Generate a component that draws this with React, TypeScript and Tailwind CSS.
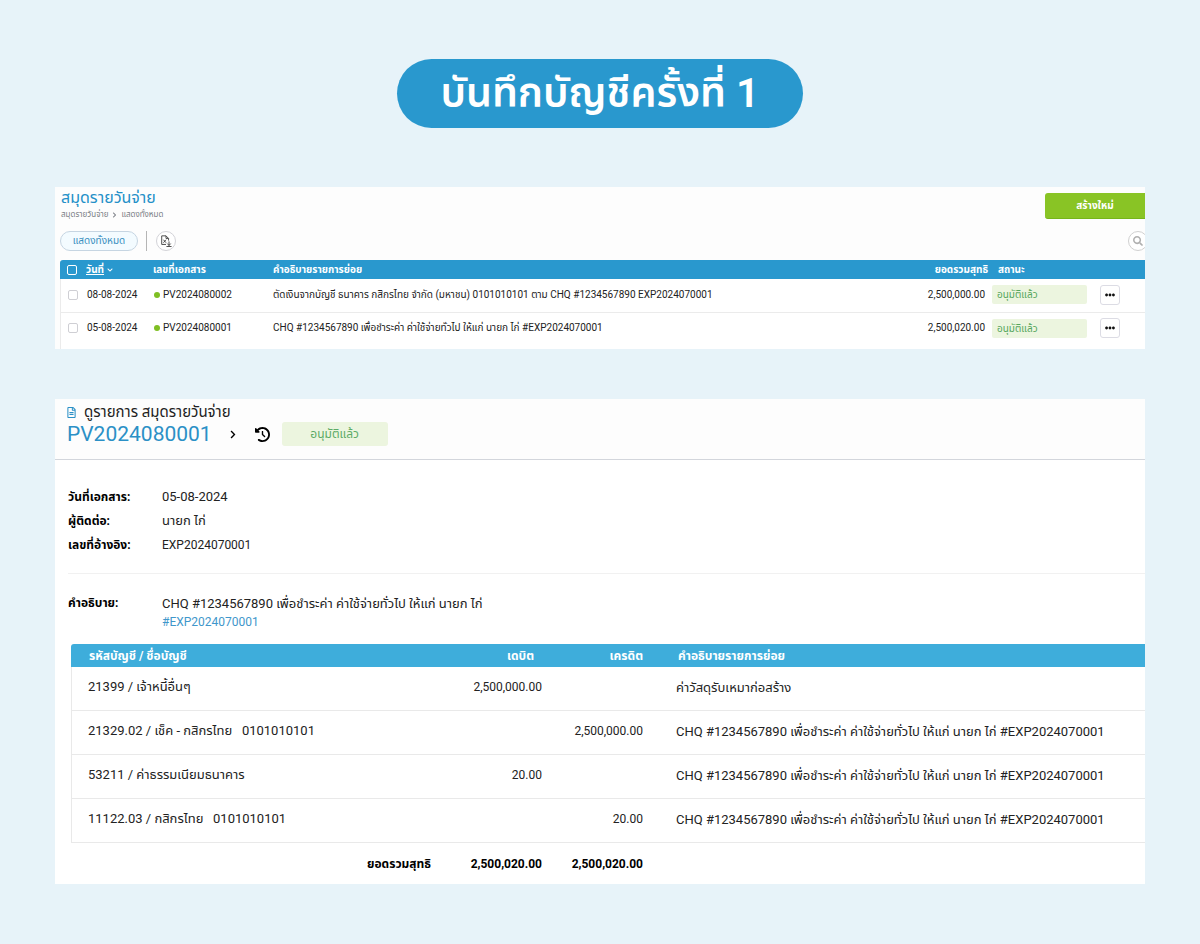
import { FaChevronDown, FaChevronRight, FaEllipsisH, FaRegFileAlt, FaSearch } from 'react-icons/fa';
import { FaClockRotateLeft } from 'react-icons/fa6';

const vouchers = [
  {
    date: '08-08-2024',
    code: 'PV2024080002',
    description: 'ตัดเงินจากบัญชี ธนาคาร กสิกรไทย จำกัด (มหาชน) 0101010101 ตาม CHQ #1234567890 EXP2024070001',
    total: '2,500,000.00',
  },
  {
    date: '05-08-2024',
    code: 'PV2024080001',
    description: 'CHQ #1234567890 เพื่อชำระค่า ค่าใช้จ่ายทั่วไป ให้แก่ นายก ไก่ #EXP2024070001',
    total: '2,500,020.00',
  },
];

const note = 'CHQ #1234567890 เพื่อชำระค่า ค่าใช้จ่ายทั่วไป ให้แก่ นายก ไก่ #EXP2024070001';

const entries = [
  { account: '21399 / เจ้าหนี้อื่นๆ', debit: '2,500,000.00', credit: '', note: 'ค่าวัสดุรับเหมาก่อสร้าง' },
  { account: '21329.02 / เช็ค - กสิกรไทย\u00a0\u00a0 0101010101', debit: '', credit: '2,500,000.00', note },
  { account: '53211 / ค่าธรรมเนียมธนาคาร', debit: '20.00', credit: '', note },
  { account: '11122.03 / กสิกรไทย\u00a0\u00a0 0101010101', debit: '', credit: '20.00', note },
];

function ExportIcon() {
  return (
    <svg viewBox="0 0 14 14" className="h-3 w-3" fill="none" stroke="currentColor" strokeWidth="1.1">
      <path d="M7 11H2V1h5l3 3v2.500M7 1v3h3" />
      <path d="M4 5.500l3 3.500M7 5.500l-3 3.500" />
      <path d="M10.500 7.500v5M8.500 10l2 2.200 2-2.200M7.500 13.400h6" />
    </svg>
  );
}

function VoucherList() {
  return (
    <section className="overflow-hidden bg-[#fdfdfd]">
      <div className="flex items-start justify-between pt-[3px] pl-[6px]">
        <div>
          <h2 className="text-base leading-4 text-[#2490c8]">สมุดรายวันจ่าย</h2>
          <nav className="flex items-center gap-1 text-[8px] leading-[18px] text-[#7b7f86]">
            <a href="#journal">สมุดรายวันจ่าย</a>
            <FaChevronRight className="h-[6px] w-[5px]" />
            <span>แสดงทั้งหมด</span>
          </nav>
        </div>
        <button type="button" className="mt-[3px] h-[26px] w-[100px] rounded-l-[3px] border-b border-[#76b51b] bg-[#89c425] text-[10px] font-bold text-white">
          สร้างใหม่
        </button>
      </div>

      <div className="mt-[7px] flex h-5 items-center pl-[5px]">
        <button type="button" className="h-5 w-[78px] rounded-full border border-[#c6d5e2] bg-[#f3fbff] text-[10px] leading-none text-[#3a8fc0]">
          แสดงทั้งหมด
        </button>
        <span className="ml-2 h-5 w-px bg-[#b5b5b5]" />
        <button type="button" aria-label="ส่งออก" className="ml-[9px] flex h-5 w-5 items-center justify-center rounded-full border border-[#d3d3d8] bg-white text-[#444]">
          <ExportIcon />
        </button>
        <button type="button" aria-label="ค้นหา" className="-mr-[3px] ml-auto flex h-5 w-5 items-center justify-center rounded-full border border-[#d0d0d0] bg-white text-[#b0b0b0]">
          <FaSearch className="h-[10px] w-[10px]" />
        </button>
      </div>

      <div className="mt-[9px] pl-[5px]">
        <table className="w-full table-fixed border-separate border-spacing-0 bg-white text-left text-[10px] leading-3 text-[#222]">
          <colgroup>
            <col className="w-[26px]" />
            <col className="w-[67px]" />
            <col className="w-[120px]" />
            <col />
            <col className="w-[100px]" />
            <col className="w-[108px]" />
            <col className="w-[45px]" />
          </colgroup>
          <thead>
            <tr className="h-[19px] text-white">
              <th className="rounded-tl-[3px] bg-[#2998ce] pl-[7px]">
                <input type="checkbox" aria-label="เลือกทั้งหมด" className="block h-[10px] w-[10px] appearance-none rounded-[2px] border border-white" />
              </th>
              <th className="bg-[#2998ce]">
                <span className="flex items-center gap-[3px]">
                  <span className="underline">วันที่</span>
                  <FaChevronDown className="h-[6px] w-[6px]" />
                </span>
              </th>
              <th className="bg-[#2998ce]">เลขที่เอกสาร</th>
              <th className="bg-[#2998ce]">คำอธิบายรายการย่อย</th>
              <th className="bg-[#2998ce] pr-1 text-right">ยอดรวมสุทธิ</th>
              <th className="bg-[#2998ce] pl-[6px]">สถานะ</th>
              <th className="bg-[#2998ce]" aria-label="เมนู" />
            </tr>
          </thead>
          <tbody>
            {vouchers.map((voucher, index) => (
              <tr
                key={voucher.code}
                className={
                  index === 0
                    ? 'h-[34px] [&>td]:border-b [&>td]:border-[#ebebeb] [&>td]:pb-[2px]'
                    : 'h-9 [&>td]:border-[#ebebeb] [&>td]:pb-[6px]'
                }
              >
                <td className="border-l pl-[7px]">
                  <input type="checkbox" aria-label={`เลือก ${voucher.code}`} className="block h-[10px] w-[10px] appearance-none rounded-[2px] border border-[#cfcfd4] bg-white" />
                </td>
                <td className="pl-px">{voucher.date}</td>
                <td className="pl-px">
                  <span className="flex items-center gap-[3px]">
                    <span className="h-[6px] w-[6px] rounded-full bg-[#7fbf23]" />
                    {voucher.code}
                  </span>
                </td>
                <td className="whitespace-nowrap">{voucher.description}</td>
                <td className="pr-[7px] text-right">{voucher.total}</td>
                <td>
                  <div className="h-[19px] w-[95px] rounded-[2px] bg-[#ecf5df] pl-[5px] leading-[19px] text-[#55a65c]">อนุมัติแล้ว</div>
                </td>
                <td>
                  <button type="button" aria-label="เพิ่มเติม" className="flex h-5 w-5 items-center justify-center rounded-[3px] border border-[#dcdce4] text-[#111]">
                    <FaEllipsisH className="h-[10px] w-[10px]" />
                  </button>
                </td>
              </tr>
            ))}
          </tbody>
        </table>
      </div>
    </section>
  );
}

function VoucherDetail() {
  return (
    <section className="overflow-hidden bg-white">
      <header className="h-[61px] border-b border-[#d3d6dc] bg-[#fdfdfd] pt-1 pl-3">
        <p className="flex items-center gap-2 text-[15px] leading-[18px] text-[#222]">
          <FaRegFileAlt className="h-[11px] w-[9px] text-[#2b90c6]" />
          ดูรายการ สมุดรายวันจ่าย
        </p>
        <div className="flex h-[26px] items-center">
          <h2 className="text-[21px] leading-6 text-[#2b90c6]">PV2024080001</h2>
          <FaChevronRight className="ml-[18px] h-[9px] w-[6px]" />
          <FaClockRotateLeft className="ml-[19px] h-[15px] w-[15px]" />
          <span className="ml-3 h-6 w-[106px] rounded-[3px] bg-[#ecf5df] text-center text-[12px] leading-6 text-[#5cab66]">อนุมัติแล้ว</span>
        </div>
      </header>

      <div className="pl-[13px] text-[13px] text-[#222]">
        <dl className="grid grid-cols-[94px_1fr] border-b border-[#f1f1f1] pt-[25px] pb-4 leading-6">
          <dt className="text-[12px] leading-6 font-bold text-black">วันที่เอกสาร:</dt>
          <dd>05-08-2024</dd>
          <dt className="text-[12px] leading-6 font-bold text-black">ผู้ติดต่อ:</dt>
          <dd>นายก ไก่</dd>
          <dt className="text-[12px] leading-6 font-bold text-black">เลขที่อ้างอิง:</dt>
          <dd className="text-[12px] leading-6">EXP2024070001</dd>
        </dl>
        <dl className="grid grid-cols-[94px_1fr] pt-5 pb-3 leading-[19px]">
          <dt className="text-[12px] leading-[19px] font-bold text-black">คำอธิบาย:</dt>
          <dd>
            CHQ #1234567890 เพื่อชำระค่า ค่าใช้จ่ายทั่วไป ให้แก่ นายก ไก่
            <a href="#EXP2024070001" className="block text-[12px] leading-[19px] text-[#3f97cb]">#EXP2024070001</a>
          </dd>
        </dl>
      </div>

      <div className="pl-4">
        <table className="w-full table-fixed border-separate border-spacing-0 text-left text-[12px] leading-4 text-[#222]">
          <colgroup>
            <col className="w-[371px]" />
            <col className="w-[100px]" />
            <col className="w-[101px]" />
            <col />
          </colgroup>
          <thead>
            <tr className="h-[23px] text-white">
              <th className="rounded-tl-[3px] bg-[#3eaddb] pl-[18px]">รหัสบัญชี / ชื่อบัญชี</th>
              <th className="bg-[#3eaddb] pr-2 text-right">เดบิต</th>
              <th className="bg-[#3eaddb] text-right">เครดิต</th>
              <th className="bg-[#3eaddb] pl-[35px]">คำอธิบายรายการย่อย</th>
            </tr>
          </thead>
          <tbody>
            {entries.map((entry) => (
              <tr key={entry.account} className="h-11">
                <td className="border-b border-l border-[#e9e9e9] pb-1 pl-4 text-[13px] leading-4 whitespace-nowrap">{entry.account}</td>
                <td className="border-b border-[#e9e9e9] pb-1 text-right">{entry.debit}</td>
                <td className="border-b border-[#e9e9e9] pb-1 text-right">{entry.credit}</td>
                <td className="border-b border-[#e9e9e9] pb-[2px] pl-[33px] text-[13px] leading-4 whitespace-nowrap">{entry.note}</td>
              </tr>
            ))}
          </tbody>
          <tfoot>
            <tr className="h-[41px] font-bold text-black">
              <td className="pr-[11px] text-right">ยอดรวมสุทธิ</td>
              <td className="text-right">2,500,020.00</td>
              <td className="text-right">2,500,020.00</td>
              <td />
            </tr>
          </tfoot>
        </table>
      </div>
    </section>
  );
}

export default function App() {
  return (
    <main className="min-h-screen bg-[#e7f3f9] px-[55px] pt-[59px] pb-[60px] font-['Roboto','Noto_Sans_Thai',sans-serif]">
      <h1 className="mx-auto flex h-[69px] w-fit items-center rounded-full bg-[#2998ce] px-[43px] text-[41px] font-semibold text-white">
        บันทึกบัญชีครั้งที่ 1
      </h1>
      <div className="mt-[59px] flex flex-col gap-[50px]">
        <VoucherList />
        <VoucherDetail />
      </div>
    </main>
  );
}
